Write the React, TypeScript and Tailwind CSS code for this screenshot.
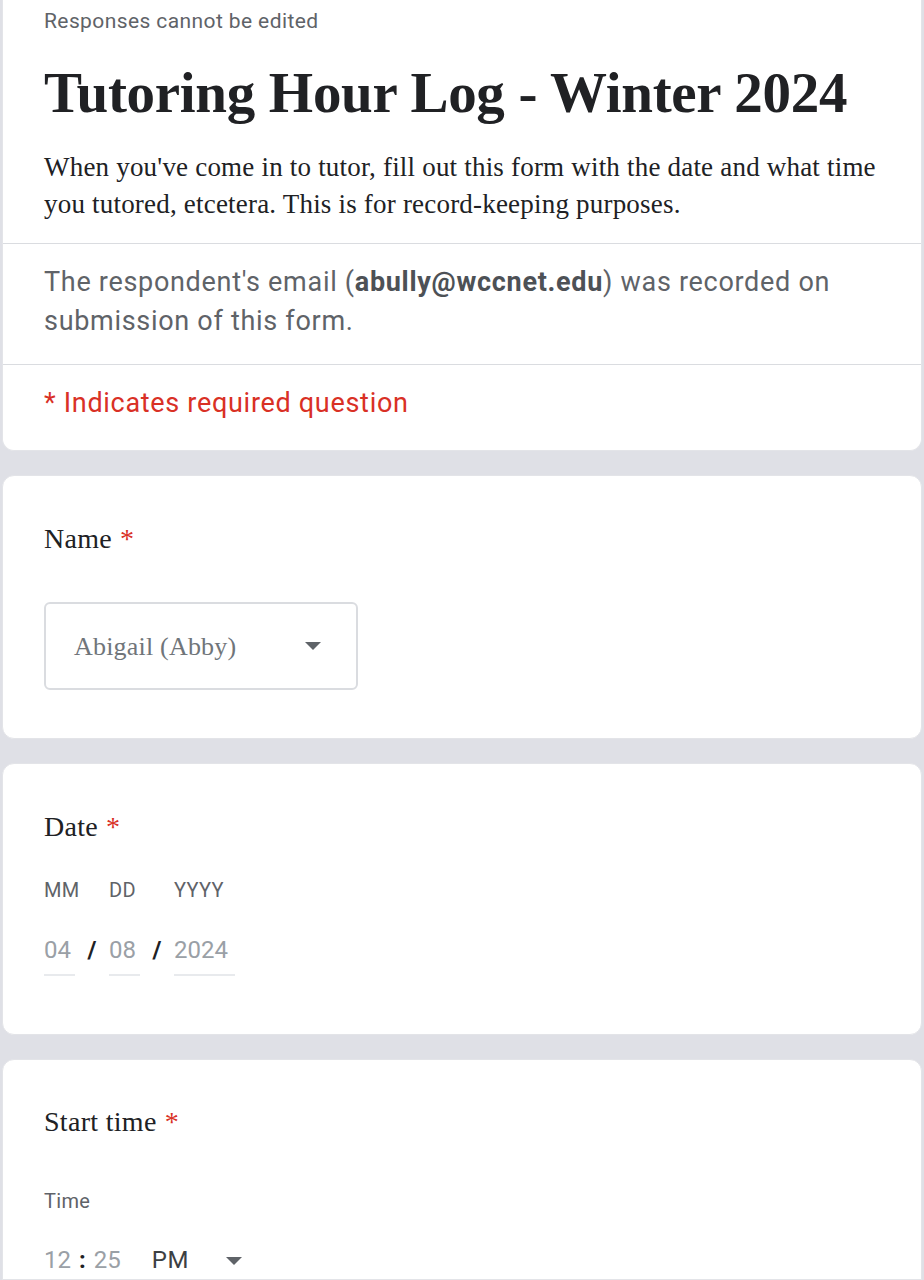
const serif = { fontFamily: '"Liberation Serif", "DejaVu Serif", serif' };
const sans = { fontFamily: 'Roboto, "Liberation Sans", sans-serif' };

const Caret = ({ className = "" }: { className?: string }) => (
  <svg width="18" height="10" viewBox="0 0 18 10" className={className}>
    <path d="M1 1 L17 1 L9 9 Z" fill="#5f6368" />
  </svg>
);

const Req = () => <span className="text-[#d93025] ml-[8px]">*</span>;

const Card = ({ children, className = "" }: { children: React.ReactNode; className?: string }) => (
  <div className={"bg-white rounded-[12px] border border-[#e3e4e8] " + className}>{children}</div>
);

export default function App() {
  return (
    <div className="min-h-[1280px] bg-[#dfe0e6] px-[2px] flex flex-col gap-[24px] overflow-hidden" style={sans}>
      <Card className="rounded-t-none border-t-0">
        <div className="px-[41px] pt-[8px] pb-[20px]">
          <div className="text-[21px] tracking-[0.4px] text-[#5f6368] leading-[26px]">Responses cannot be edited</div>
          <h1 className="mt-[26px] text-[57px] leading-[66px] font-bold text-[#202124] tracking-[-0.3px]" style={serif}>
            Tutoring Hour Log - Winter 2024
          </h1>
          <p className="mt-[23px] text-[27px] tracking-[0.2px] leading-[37px] text-[#202124]" style={serif}>
            When you've come in to tutor, fill out this form with the date and what time you tutored, etcetera. This is for record-keeping purposes.
          </p>
        </div>
        <div className="border-t border-[#dadce0] px-[41px] pt-[19px] pb-[23px] text-[27px] tracking-[0.7px] leading-[39px] text-[#5f6368]">
          The respondent's email (<b className="font-bold text-[#4d5156]">abully@wccnet.edu</b>) was recorded on submission of this form.
        </div>
        <div className="border-t border-[#dadce0] px-[41px] pt-[19px] pb-[27px] text-[27px] tracking-[0.7px] leading-[39px] text-[#d93025]">
          * Indicates required question
        </div>
      </Card>

      <Card>
        <div className="px-[41px] pt-[43px] pb-[48px]">
          <div className="text-[28px] tracking-[0.3px] leading-[40px] text-[#202124]" style={serif}>
            Name<Req />
          </div>
          <div className="mt-[43px] w-[314px] h-[88px] border-2 border-[#dadce0] rounded-[6px] flex items-center justify-between pl-[28px] pr-[34px]">
            <span className="text-[26px] tracking-[0.2px] text-[#70757a]" style={serif}>Abigail (Abby)</span>
            <Caret />
          </div>
        </div>
      </Card>

      <Card>
        <div className="px-[41px] pt-[43px] pb-[58px]">
          <div className="text-[28px] tracking-[0.3px] leading-[40px] text-[#202124]" style={serif}>
            Date<Req />
          </div>
          <div className="mt-[30px] flex text-[20px] tracking-[0.3px] leading-[26px] text-[#5f6368]">
            <span className="w-[65px]">MM</span>
            <span className="w-[65px]">DD</span>
            <span>YYYY</span>
          </div>
          <div className="mt-[30px] flex items-end text-[24px] leading-[34px]">
            <span className="w-[31px] border-b-2 border-[#e8eaed] text-[#9aa0a6] pb-[7px]">04</span>
            <span className="w-[34px] text-center font-bold text-[#202124] pb-[9px]">/</span>
            <span className="w-[31px] border-b-2 border-[#e8eaed] text-[#9aa0a6] pb-[7px]">08</span>
            <span className="w-[34px] text-center font-bold text-[#202124] pb-[9px]">/</span>
            <span className="w-[61px] border-b-2 border-[#e8eaed] text-[#9aa0a6] pb-[7px]">2024</span>
          </div>
        </div>
      </Card>

      <Card className="rounded-b-none flex-1">
        <div className="px-[41px] pt-[42px]">
          <div className="text-[28px] tracking-[0.3px] leading-[40px] text-[#202124]" style={serif}>
            Start time<Req />
          </div>
          <div className="mt-[46px] text-[20px] tracking-[0.3px] leading-[26px] text-[#5f6368]">Time</div>
          <div className="mt-[29px] flex items-center text-[24px] leading-[34px]">
            <span className="text-[#9aa0a6]">12</span>
            <span className="mx-[8px] font-bold text-[#202124]">:</span>
            <span className="text-[#9aa0a6]">25</span>
            <span className="ml-[31px] text-[#3c4043] tracking-[0.5px]">PM</span>
            <Caret className="ml-[36px] mt-[2px]" />
          </div>
        </div>
      </Card>
    </div>
  );
}
